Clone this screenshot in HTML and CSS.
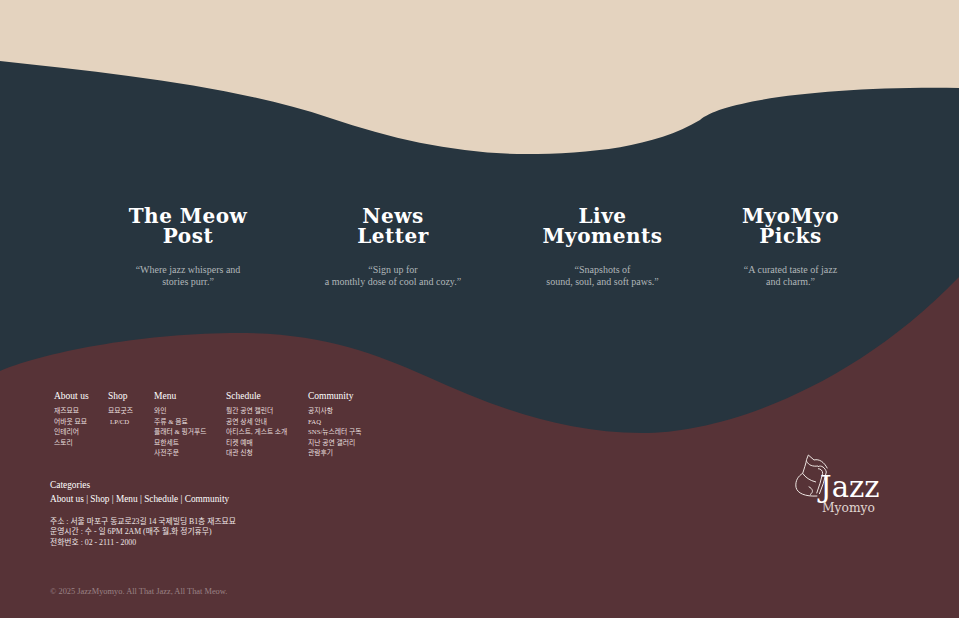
FILE: index.html
```html
<!DOCTYPE html>
<html lang="ko">
<head>
  <meta charset="UTF-8">
  <meta name="viewport" content="width=device-width, initial-scale=1.0">
  <title>Jazz Myomyo</title>
  <link rel="stylesheet" href="styles.css">
</head>
<body>
  <svg class="waves" viewBox="0 0 959 618" preserveAspectRatio="none" aria-hidden="true">
    <rect width="959" height="618" fill="#e4d3bf"/>
    <path fill="#27353f" d="M0 61C110 73 230 85 330 118C395 140 460 154 526 154C590 154 655 147 700 120C722 100 830 86 959 88V618H0Z"/>
    <path fill="#573337" d="M0 371C50 350 150 333 238 333C320 333 372 352 428 377C490 405 560 433 642 433C720 433 850 390 959 277V618H0Z"/>
  </svg>

  <main class="page">
    <section class="features">
      <article class="feature">
        <h2>The Meow<br>Post</h2>
        <p>“Where jazz whispers and<br>stories purr.”</p>
      </article>
      <article class="feature">
        <h2>News<br>Letter</h2>
        <p>“Sign up for<br>a monthly dose of cool and cozy.”</p>
      </article>
      <article class="feature">
        <h2>Live<br>Myoments</h2>
        <p>“Snapshots of<br>sound, soul, and soft paws.”</p>
      </article>
      <article class="feature">
        <h2>MyoMyo<br>Picks</h2>
        <p>“A curated taste of jazz<br>and charm.”</p>
      </article>
    </section>

    <footer class="footer">
      <div class="footer-left">
        <nav class="sitemap">
          <div class="col col-about">
            <h3>About us</h3>
            <a>재즈묘묘</a>
            <a>어바웃 묘묘</a>
            <a>인테리어</a>
            <a>스토리</a>
          </div>
          <div class="col col-shop">
            <h3>Shop</h3>
            <a>묘묘굿즈</a>
            <a class="indent">LP/CD</a>
          </div>
          <div class="col col-menu">
            <h3>Menu</h3>
            <a>와인</a>
            <a>주류 &amp; 음료</a>
            <a>플래터 &amp; 핑거푸드</a>
            <a>묘한세트</a>
            <a>사전주문</a>
          </div>
          <div class="col col-schedule">
            <h3>Schedule</h3>
            <a>월간 공연 캘린더</a>
            <a>공연 상세 안내</a>
            <a>아티스트, 게스트 소개</a>
            <a>티켓 예매</a>
            <a>대관 신청</a>
          </div>
          <div class="col">
            <h3>Community</h3>
            <a>공지사항</a>
            <a>FAQ</a>
            <a>SNS/뉴스레터 구독</a>
            <a>지난 공연 갤러리</a>
            <a>관람후기</a>
          </div>
        </nav>

        <div class="categories">
          <h4>Categories</h4>
          <p>About us | Shop | Menu | Schedule | Community</p>
        </div>

        <address class="info">
          주소 : 서울 마포구 동교로23길 14 국제빌딩 B1층 재즈묘묘<br>
          운영시간 : 수 - 일 6PM 2AM (매주 월,화 정기휴무)<br>
          전화번호 : 02 - 2111 - 2000
        </address>

        <p class="copy">© 2025 JazzMyomyo. All That Jazz, All That Meow.</p>
      </div>

      <div class="logo">
        <svg class="cat" viewBox="0 0 180 165" aria-hidden="true">
          <path d="M55 15L50 28C48 40 42 58 38 70C25 78 15 92 18 112C22 130 45 140 82 138"/>
          <path d="M55 15L72 30C88 26 102 36 112 55"/>
          <path d="M50 34C56 46 68 50 84 48"/>
          <path d="M84 50C94 44 106 54 109 66L100 100L88 132"/>
          <path d="M84 56C92 56 98 62 98 70L90 100L80 130"/>
          <path d="M38 70C46 82 60 92 78 96"/>
          <path d="M56 110C68 116 72 126 60 134"/>
        </svg>
        <span class="logo-jazz">Jazz</span>
        <span class="logo-name">Myomyo</span>
      </div>
    </footer>
  </main>
</body>
</html>
```

FILE: styles.css
```css
* {
  box-sizing: border-box;
}
html, body {
  margin: 0;
  height: 100%;
}
body {
  position: relative;
  overflow: hidden;
  font-family: "Liberation Serif", "Noto Sans CJK KR", serif;
  color: #fff;
}
.waves {
  position: absolute;
  top: 0;
  left: 0;
  width: 959px;
  height: 618px;
}
.page {
  position: relative;
  height: 618px;
  display: flex;
  flex-direction: column;
}

/* four teaser blocks */
.features {
  display: grid;
  grid-template-columns: 190px 220px 199px 177px;
  padding: 206px 0 0 93px;
  height: 390px;
}
.feature {
  text-align: center;
}
.feature h2 {
  margin: 0;
  font-family: "DejaVu Serif", serif;
  font-size: 20px;
  line-height: 20px;
  font-weight: 700;
  letter-spacing: 0.5px;
}
.feature p {
  margin: 18px 0 0;
  font-size: 10px;
  line-height: 12px;
  color: #b0b6b9;
}

/* footer */
.footer {
  display: flex;
  justify-content: space-between;
  padding: 0 78px 0 50px;
}
.sitemap {
  display: flex;
  padding-left: 4px;
}
.col {
  display: flex;
  flex-direction: column;
}
.col-about { width: 54px; }
.col-shop { width: 46px; }
.col-menu { width: 72px; }
.col-schedule { width: 82px; }
.col h3 {
  margin: 0 0 4px;
  font-size: 9.5px;
  line-height: 12px;
  font-weight: 400;
}
.col a {
  font-size: 6.8px;
  line-height: 10.5px;
  color: #e8dfdf;
}
.col a.indent {
  padding-left: 2px;
}
.categories {
  margin-top: 20px;
}
.categories h4 {
  margin: 0;
  font-size: 9.4px;
  line-height: 12px;
  font-weight: 400;
}
.categories p {
  margin: 1px 0 0;
  font-size: 9.3px;
  line-height: 14px;
}
.info {
  margin-top: 11px;
  font-style: normal;
  font-size: 7.8px;
  line-height: 10.5px;
  color: #eee5e5;
}
.copy {
  margin: 38px 0 0;
  font-size: 8.4px;
  line-height: 12px;
  color: #9a8285;
}

/* logo */
.logo {
  position: relative;
  width: 90px;
  height: 70px;
  margin-top: 60px;
}
.cat {
  position: absolute;
  top: 0;
  left: -1px;
  width: 60px;
  height: 55px;
  fill: none;
  stroke: #eee6e2;
  stroke-width: 3;
}
.logo-jazz {
  position: absolute;
  top: 22px;
  left: 29px;
  font-family: "DejaVu Serif", serif;
  font-size: 29px;
  line-height: 30px;
}
.logo-name {
  position: absolute;
  top: 50px;
  left: 31px;
  font-family: "DejaVu Serif", serif;
  font-size: 12.3px;
  line-height: 16px;
  color: #e0d6d2;
}
```
